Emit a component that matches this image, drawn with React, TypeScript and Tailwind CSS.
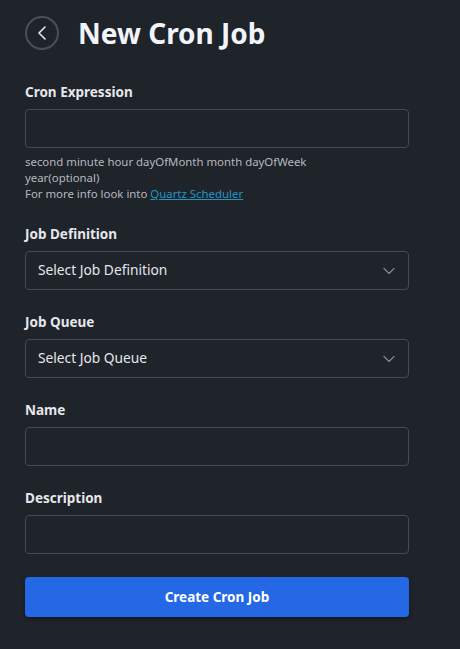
import { ChevronLeft, ChevronDown } from 'lucide-react'

export default function App() {
  return (
    <div
      className="min-h-screen w-full bg-[#1f232a] text-[#e5e7eb]"
      style={{ fontFamily: '"Noto Sans", "Open Sans", sans-serif' }}
    >
      <div className="px-[25px] pt-[16px] pb-8 w-[434px]">
        {/* Header */}
        <div className="flex items-center gap-[19px]">
          <button className="w-[34px] h-[34px] rounded-full border-2 border-[#4b5058] flex items-center justify-center text-[#e5e7eb]">
            <ChevronLeft className="w-[24px] h-[24px]" strokeWidth={1.6} />
          </button>
          <h1 className="text-[28px] leading-[34px] font-bold text-[#f1f5fb]">New Cron Job</h1>
        </div>

        {/* Cron expression */}
        <div className="mt-[32px]">
          <label className="block text-[13.5px] leading-[20px] font-bold mb-[7px]">Cron Expression</label>
          <input className="w-full h-[39px] rounded-[4px] border border-[#454a53] bg-transparent px-3 text-sm outline-none" />
          <p className="mt-[6px] text-[11.4px] leading-[16px] text-[#b4b8bf]">
            second minute hour dayOfMonth month dayOfWeek
            <br />
            year(optional)
            <br />
            For more info look into{' '}
            <a href="#" className="text-[#2196c4] underline">Quartz Scheduler</a>
          </p>
        </div>

        <Field label="Job Definition" className="mt-[22px]">
          <Select placeholder="Select Job Definition" />
        </Field>

        <Field label="Job Queue" className="mt-[22px]">
          <Select placeholder="Select Job Queue" />
        </Field>

        <Field label="Name" className="mt-[22px]">
          <input className="w-full h-[39px] rounded-[4px] border border-[#454a53] bg-transparent px-3 text-sm outline-none" />
        </Field>

        <Field label="Description" className="mt-[22px]">
          <input className="w-full h-[39px] rounded-[4px] border border-[#454a53] bg-transparent px-3 text-sm outline-none" />
        </Field>

        <button className="mt-[23px] w-full h-[40px] rounded-[4px] bg-[#2468e6] text-white text-[13.5px] font-bold shadow-[0_2px_4px_rgba(0,0,0,0.35)]">
          Create Cron Job
        </button>
      </div>
    </div>
  )
}

function Field({ label, className, children }: { label: string; className?: string; children: React.ReactNode }) {
  return (
    <div className={className}>
      <label className="block text-[13.5px] leading-[20px] font-bold mb-[7px]">{label}</label>
      {children}
    </div>
  )
}

function Select({ placeholder }: { placeholder: string }) {
  return (
    <div className="w-full h-[39px] rounded-[4px] border border-[#454a53] flex items-center justify-between pl-[12px] pr-[9px]">
      <span className="text-[13.75px] text-[#e5e7eb]">{placeholder}</span>
      <ChevronDown className="w-[20px] h-[20px] text-[#80858e]" strokeWidth={1.5} />
    </div>
  )
}
